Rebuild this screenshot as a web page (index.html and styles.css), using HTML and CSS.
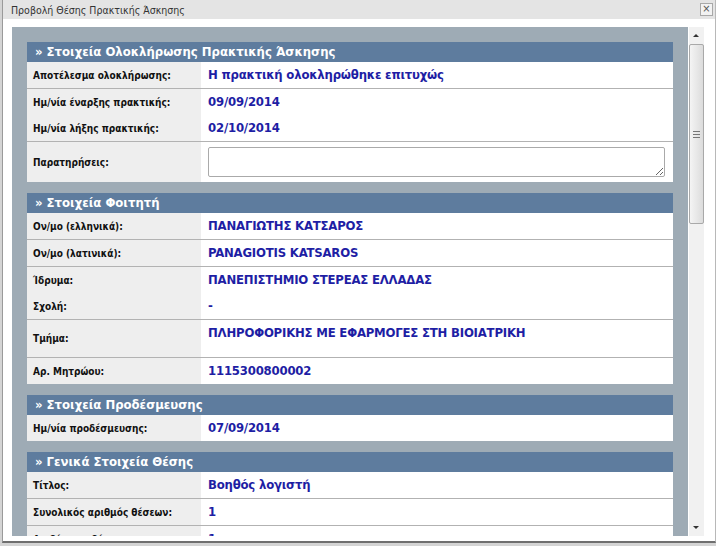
FILE: index.html
```html
<!doctype html>
<html lang="el">
  <head>
    <meta charset="utf-8" />
    <meta name="viewport" content="width=device-width, initial-scale=1" />
    <title>Προβολή Θέσης Πρακτικής Άσκησης</title>
    <link rel="stylesheet" href="styles.css">
  </head>
  <body>
    <div class="dialog">
      <div class="titlebar">
        <span class="title">Προβολή Θέσης Πρακτικής Άσκησης</span>
        <span class="close">&#215;</span>
      </div>
      <div class="body">
        <div class="viewport">
          <div class="panel">
            <div class="section">
              <div class="head">» Στοιχεία Ολοκλήρωσης Πρακτικής Άσκησης</div>
              <div class="row line">
                <div class="label">Αποτέλεσμα ολοκλήρωσης:</div>
                <div class="value">Η πρακτική ολοκληρώθηκε επιτυχώς</div>
              </div>
              <div class="row">
                <div class="label">Ημ/νία έναρξης πρακτικής:</div>
                <div class="value">09/09/2014</div>
              </div>
              <div class="row line">
                <div class="label">Ημ/νία λήξης πρακτικής:</div>
                <div class="value">02/10/2014</div>
              </div>
              <div class="row tall">
                <div class="label">Παρατηρήσεις:</div>
                <div class="value"><textarea class="notes"></textarea></div>
              </div>
            </div>

            <div class="section">
              <div class="head">» Στοιχεία Φοιτητή</div>
              <div class="row line">
                <div class="label">Ον/μο (ελληνικά):</div>
                <div class="value">ΠΑΝΑΓΙΩΤΗΣ ΚΑΤΣΑΡΟΣ</div>
              </div>
              <div class="row line">
                <div class="label">Ον/μο (λατινικά):</div>
                <div class="value">PANAGIOTIS KATSAROS</div>
              </div>
              <div class="row">
                <div class="label">Ίδρυμα:</div>
                <div class="value">ΠΑΝΕΠΙΣΤΗΜΙΟ ΣΤΕΡΕΑΣ ΕΛΛΑΔΑΣ</div>
              </div>
              <div class="row line">
                <div class="label">Σχολή:</div>
                <div class="value">-</div>
              </div>
              <div class="row line wrap">
                <div class="label">Τμήμα:</div>
                <div class="value">ΠΛΗΡΟΦΟΡΙΚΗΣ ΜΕ ΕΦΑΡΜΟΓΕΣ ΣΤΗ ΒΙΟΙΑΤΡΙΚΗ</div>
              </div>
              <div class="row">
                <div class="label">Αρ. Μητρώου:</div>
                <div class="value">1115300800002</div>
              </div>
            </div>

            <div class="section">
              <div class="head">» Στοιχεία Προδέσμευσης</div>
              <div class="row">
                <div class="label">Ημ/νία προδέσμευσης:</div>
                <div class="value">07/09/2014</div>
              </div>
            </div>

            <div class="section">
              <div class="head">» Γενικά Στοιχεία Θέσης</div>
              <div class="row line">
                <div class="label">Τίτλος:</div>
                <div class="value">Βοηθός λογιστή</div>
              </div>
              <div class="row line">
                <div class="label">Συνολικός αριθμός θέσεων:</div>
                <div class="value">1</div>
              </div>
              <div class="row line">
                <div class="label">Διαθέσιμες θέσεις:</div>
                <div class="value">1</div>
              </div>
            </div>
          </div>
        </div>
        <div class="scrollbar">
          <div class="arrow up"></div>
          <div class="thumb"><span class="grip"></span></div>
          <div class="track"></div>
          <div class="arrow down"></div>
        </div>
      </div>
    </div>
  </body>
</html>
```

FILE: styles.css
```css
body {
  margin: 0;
  background: #d4d4d4;
  font-family: "DejaVu Sans Condensed", "DejaVu Sans", sans-serif;
  font-stretch: condensed;
  color: #111;
}
.dialog {
  margin-left: 2px;
  width: 712px;
  height: 541px;
  background: #fff;
  border-left: 1px solid #9a9a9a;
  border-right: 1px solid #b8b8b8;
  border-bottom: 2px solid #6f6f6f;
  overflow: hidden;
}
.titlebar {
  height: 19px;
  background: #e4e4e4;
  display: flex;
  align-items: center;
  justify-content: space-between;
  padding: 0 2px 0 8px;
}
.title {
  font-size: 10.5px;
  color: #333;
}
.close {
  width: 11px;
  height: 11px;
  border: 1px solid #a8a8a8;
  background: #f2f2f2;
  color: #555;
  font-size: 11px;
  line-height: 10px;
  text-align: center;
}
.body {
  display: flex;
  padding: 8px 0 0 9px;
}
.viewport {
  width: 676px;
  height: 509px;
  overflow: hidden;
  background: #9eabb5;
}
.panel {
  padding: 15px 15px 0 15px;
}
.section {
  background: #fff;
  margin-bottom: 11px;
}
.head {
  height: 20px;
  line-height: 20px;
  background: #5e7c9e;
  color: #fff;
  font-weight: bold;
  font-size: 13px;
  padding-left: 8px;
}
.row {
  display: grid;
  grid-template-columns: 174px 1fr;
  min-height: 26px;
}
.row.line {
  border-bottom: 1px solid #b2b2b2;
}
.row.tall {
  min-height: 40px;
}
.row.wrap {
  min-height: 37px;
}
.label {
  background: #eeeeee;
  font-size: 10px;
  font-weight: bold;
  padding-left: 6px;
  display: flex;
  align-items: center;
}
.value {
  font-size: 13px;
  font-weight: bold;
  color: #1e1ea4;
  padding: 5px 7px 0;
  letter-spacing: -0.2px;
}
.notes {
  display: block;
  width: 457px;
  height: 30px;
  box-sizing: border-box;
  border: 1px solid #aaa;
  border-radius: 2px;
  resize: vertical;
  margin: 0;
}
.scrollbar {
  width: 15px;
  height: 509px;
  margin-left: 1px;
  background: #f1f1f1;
  display: flex;
  flex-direction: column;
}
.arrow {
  height: 17px;
  position: relative;
}
.arrow::after {
  content: "";
  position: absolute;
  left: 4px;
  border-left: 3px solid transparent;
  border-right: 3px solid transparent;
}
.arrow.up::after {
  top: 7px;
  border-bottom: 3px solid #333;
}
.arrow.down::after {
  top: 7px;
  border-top: 3px solid #333;
}
.thumb {
  height: 180px;
  border: 1px solid #a9a9a9;
  border-radius: 2px;
  background: linear-gradient(to right, #f4f4f4, #dcdcdc);
  box-sizing: border-box;
  display: flex;
  align-items: center;
  justify-content: center;
}
.grip {
  width: 7px;
  height: 5px;
  border-top: 1px solid #777;
  border-bottom: 1px solid #777;
  position: relative;
}
.grip::after {
  content: "";
  position: absolute;
  left: 0;
  right: 0;
  top: 2px;
  border-top: 1px solid #777;
}
.track {
  flex: 1;
}
```
